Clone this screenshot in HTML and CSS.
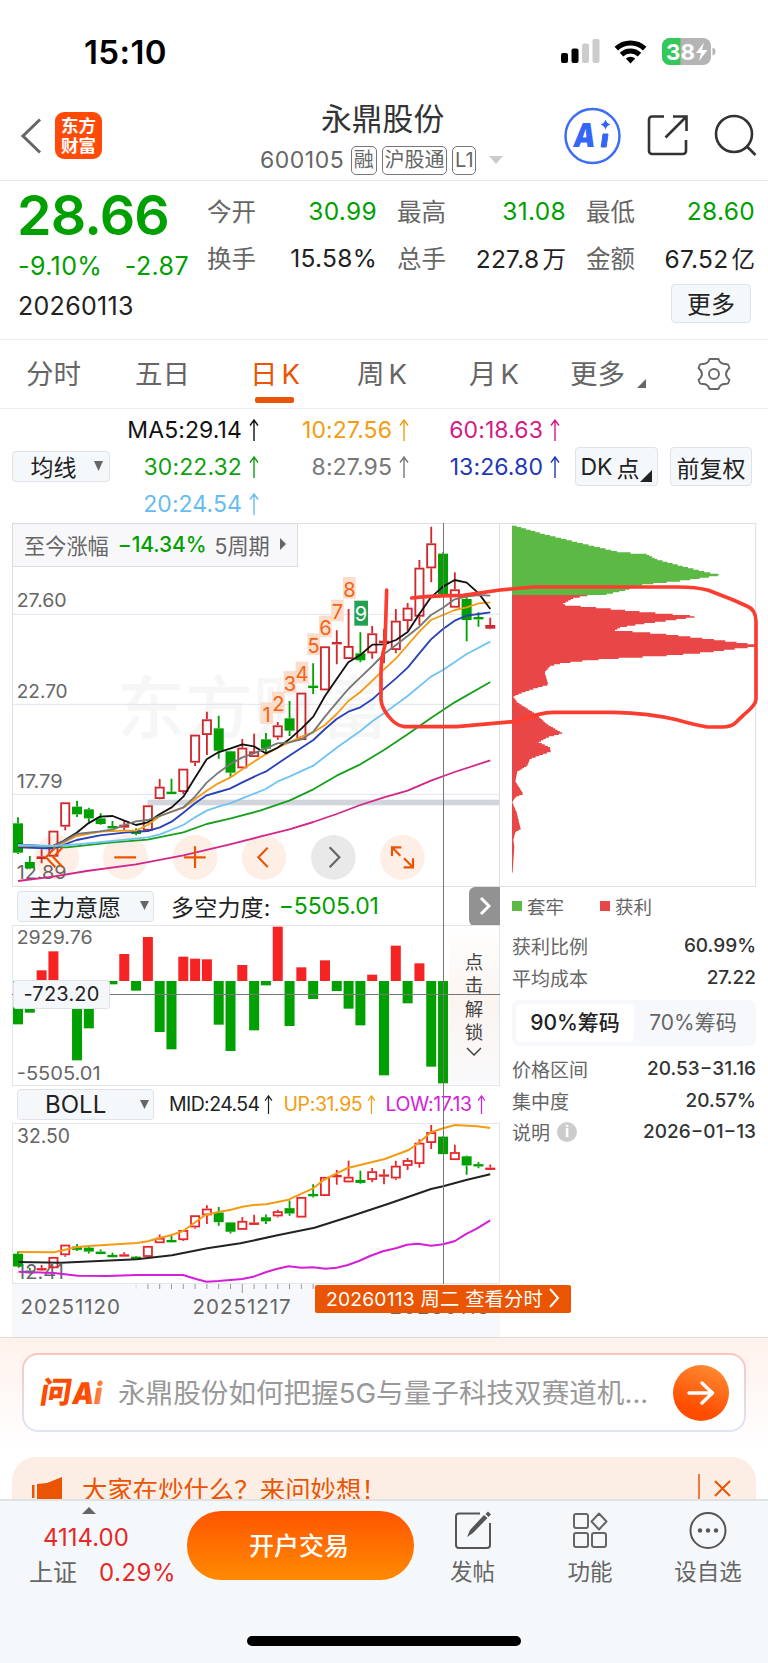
FILE: index.html
```html
<!DOCTYPE html>
<html lang="zh-CN">
<head>
<meta charset="utf-8">
<title>永鼎股份 600105</title>
<link rel="stylesheet" href="styles.css">
</head>
<body>
<svg width="0" height="0" class="defs">
  <symbol id="up" viewBox="0 0 10 22"><path d="M5 22V1M1 6.5 5 1l4 5.500" fill="none" stroke="currentColor" stroke-width="1.4"/></symbol>
</svg>
<div class="page">
  <div class="status">
    <span class="clock">15:10</span>
    <svg class="status-icons" width="156" height="28" viewBox="0 0 156 28">
      <rect x="1" y="15" width="7" height="10" rx="2"/><rect x="11.500" y="10.500" width="7" height="14.500" rx="2"/>
      <rect x="22" y="5.500" width="7" height="19.500" rx="2" fill="#ccc"/><rect x="32.500" y="1" width="7" height="24" rx="2" fill="#ccc"/>
      <path d="M70.500 25.500 65.800 20.600a7 7 0 0 1 9.400 0z"/>
      <path d="M61.500 16.600a13 13 0 0 1 18 0M56.300 10.600a20.500 20.500 0 0 1 28.400 0" fill="none" stroke="#000" stroke-width="5"/>
      <rect x="102" y="0" width="49" height="27" rx="8" fill="#b4b4b4"/>
      <path d="M110 0h10.500v27H110a8 8 0 0 1-8-8V8a8 8 0 0 1 8-8z" fill="#34c759"/>
      <path d="M152.500 9.500q3 1 3 4t-3 4z" fill="#b4b4b4"/>
      <text x="106" y="22" class="batt" textLength="29" lengthAdjust="spacingAndGlyphs">38</text>
      <path d="M144 4.500 136 15h5l-2 8 8.500-11h-5.500z" fill="#fff"/>
    </svg>
  </div>

  <header class="header">
    <svg class="back" width="22" height="36" viewBox="0 0 22 36"><path d="M20 1.500 3 18l17 16.500" fill="none" stroke="#666" stroke-width="3"/></svg>
    <div class="logo"><span>东方</span><span>财富</span></div>
    <div class="title">
      <h1>永鼎股份</h1>
      <div class="sub"><span class="code">600105</span><i>融</i><i>沪股通</i><i>L1</i><svg width="14" height="8"><path d="M0 0h14L7 8z" fill="#ccc"/></svg></div>
    </div>
    <svg class="tools" width="196" height="60" viewBox="0 0 196 60">
      <circle cx="30.500" cy="30" r="27" fill="#fff" stroke="#3d6ef5" stroke-width="2.500"/>
      <g transform="translate(6 0) skewX(-8)"><text x="10" y="41" class="ai" textLength="22" lengthAdjust="spacingAndGlyphs">A</text></g>
      <path d="M41 28h5l-1.800 13h-5z" fill="#3366f5" stroke="#3366f5" stroke-linejoin="round"/><path d="M43.500 13.500q1.200 3.800 5 5-3.800 1.200-5 5-1.200-3.800-5-5 3.800-1.200 5-5z" fill="#3366f5"/>
      <path d="M102 10.500H90a3 3 0 0 0-3 3V45a3 3 0 0 0 3 3h31a3 3 0 0 0 3-3V34M111 10.500h13.500V25M124 11 103.500 31.500" fill="none" stroke="#333" stroke-width="2.600"/>
      <circle cx="172" cy="28" r="18" fill="none" stroke="#333" stroke-width="2.600"/><path d="M185 40.500 193.500 49" stroke="#333" stroke-width="2.600"/>
    </svg>
  </header>

  <section class="quote">
    <div class="last">
      <b class="green">28.66</b>
      <div class="chg green"><span>-9.10%</span><span>-2.87</span></div>
      <div class="date">20260113</div>
    </div>
    <div class="stats">
      <div class="stat"><label>今开</label><span class="green">30.99</span></div>
      <div class="stat"><label>最高</label><span class="green">31.08</span></div>
      <div class="stat"><label>最低</label><span class="green">28.60</span></div>
      <div class="stat"><label>换手</label><span>15.58%</span></div>
      <div class="stat"><label>总手</label><span>227.8<em>万</em></span></div>
      <div class="stat"><label>金额</label><span>67.52<em>亿</em></span></div>
      <button class="btn more">更多</button>
    </div>
  </section>

  <nav class="tabs">
    <span class="t1">分时</span><span class="t2">五日</span><span class="t3 on">日<u>K</u></span><span class="t4">周<u>K</u></span><span class="t5">月<u>K</u></span><span class="t6">更多<svg width="9" height="9"><path d="M9 0v9H0z" fill="#666"/></svg></span>
    <svg class="gear" width="34" height="34" viewBox="0 0 34 34" fill="none" stroke="#666" stroke-width="1.900" stroke-linejoin="round"><path d="M12.500 2h9q1.500 5 6.500 5 2 0 3 .5l1.500 3.500q-3.500 3-3.500 6t3.500 6L31 26.500q-1 .5-3 .5-5 0-6.500 5h-9Q11 27 6 27q-2 0-3-.5L1.500 23Q5 20 5 17T1.500 11L3 7.500Q4 7 6 7q5 0 6.500-5z"/><circle cx="17" cy="17" r="5"/></svg>
  </nav>

  <section class="ma">
    <button class="btn pick">均线<svg width="9" height="10"><path d="M0 0h9L4.500 10z" fill="#666"/></svg></button>
    <div class="vals">
      <span style="color:#111">MA5:29.14<svg><use href="#up"/></svg></span><span style="color:#f39c12">10:27.56<svg><use href="#up"/></svg></span><span style="color:#d31a87">60:18.63<svg><use href="#up"/></svg></span>
      <span style="color:#11a011">30:22.32<svg><use href="#up"/></svg></span><span style="color:#777">8:27.95<svg><use href="#up"/></svg></span><span style="color:#2138b5">13:26.80<svg><use href="#up"/></svg></span>
      <span style="color:#66bcf2">20:24.54<svg><use href="#up"/></svg></span>
    </div>
    <button class="btn dk">DK<em>点</em><svg width="12" height="12"><path d="M12 0v12H0z" fill="#222"/></svg></button>
    <button class="btn adj">前复权</button>
  </section>

  <section class="charts">
    <div class="left">
      <svg class="kline" id="kline" width="488" height="364" viewBox="36 39 1464 1092"></svg>
      <div class="row">
        <button class="btn ind">主力意愿<svg width="9" height="9"><path d="M0 0h9L4.500 9z" fill="#666"/></svg></button>
        <span class="force">多空力度:</span><span class="force green num">−5505.01</span>
        <span class="expand"><svg width="12" height="20"><path d="M2 2l8 8-8 8" fill="none" stroke="#fff" stroke-width="3"/></svg></span>
      </div>
      <div class="volbox">
        <svg id="vol" width="488" height="161" viewBox="36 134 1464 483"></svg>
        <div class="lock"><span>点</span><span>击</span><span>解</span><span>锁</span><svg width="16" height="9"><path d="M1 1l7 7 7-7" fill="none" stroke="#444" stroke-width="1.500"/></svg></div>
        <div class="hline"></div>
        <div class="level">-723.20</div>
      </div>
      <div class="row">
        <button class="btn ind boll">BOLL<svg width="9" height="9"><path d="M0 0h9L4.500 9z" fill="#666"/></svg></button>
        <div class="bvals"><span style="color:#222">MID:24.54<svg><use href="#up"/></svg></span><span style="color:#f39c12">UP:31.95<svg><use href="#up"/></svg></span><span style="color:#d51ed8">LOW:17.13<svg><use href="#up"/></svg></span></div>
      </div>
      <svg id="boll" width="488" height="161" viewBox="12 1123 488 161"></svg>
      <div class="axis">
        <svg id="ticks" width="488" height="10" viewBox="12 1284 488 10"></svg>
        <div class="dates"><span>20251120</span><span>20251217</span><span>20260113</span></div>
        <div class="goto">20260113 周二 查看分时<svg width="12" height="20"><path d="M2 1l8 9-8 9" fill="none" stroke="#fff" stroke-width="2"/></svg></div>
      </div>
    </div>
    <div class="right">
      <svg id="chips" width="257" height="364" viewBox="1500 39 771 1092"></svg>
      <div class="info">
        <div class="legend"><span><i class="g"></i>套牢</span><span><i class="r"></i>获利</span></div>
        <div class="kv"><label>获利比例</label><b>60.99%</b></div>
        <div class="kv"><label>平均成本</label><b>27.22</b></div>
        <div class="seg"><span class="on">90%筹码</span><span>70%筹码</span></div>
        <div class="kv"><label>价格区间</label><b>20.53−31.16</b></div>
        <div class="kv"><label>集中度</label><b>20.57%</b></div>
        <div class="kv"><label>说明<i>i</i></label><b>2026−01−13</b></div>
      </div>
    </div>
    <div class="vline"></div>
    <div class="since">至今涨幅<b class="green">−14.34%</b>5周期<svg width="6" height="12"><path d="M0 0l6 6-6 6z" fill="#666"/></svg></div>
    <svg class="mark" width="768" height="364" viewBox="0 39 2304 1092"><path d="M1160 240 1155 405Q1143 445 1143 490V570Q1146 595 1165 618 1188 648 1213 650H1370L1550 634Q1620 607 1660 607H1840Q1950 610 2030 629 2110 651 2130 651H2165Q2195 651 2210 635L2232 614Q2268 585 2268 568V335Q2268 298 2240 288L2200 270 2125 241Q2090 231 2030 231H1600L1500 240 1390 256Q1300 256 1235 264" fill="none" stroke="#fb3d30" stroke-width="11" stroke-linecap="round" stroke-linejoin="round"/></svg>
  </section>

  <section class="ask">
    <div class="askbox">
      <svg width="64" height="34" viewBox="0 -2 64 34"><defs><linearGradient id="lg" x2="1"><stop offset=".5" stop-color="#fc4c02"/><stop offset="1" stop-color="#ff9050"/></linearGradient></defs><g transform="skewX(-9)"><text class="wen" x="3" y="25" fill="#fc4c02" textLength="31" lengthAdjust="spacingAndGlyphs">问</text><text class="wen" x="35" y="26" fill="url(#lg)" textLength="30" lengthAdjust="spacingAndGlyphs">Ai</text></g></svg>
      <span>永鼎股份如何把握5G与量子科技双赛道机...</span>
      <i><svg width="28" height="24" viewBox="0 0 28 24"><path d="M2 12h23M15 2l10.500 10L15 22" fill="none" stroke="#fff" stroke-width="3.400" stroke-linecap="round" stroke-linejoin="round"/></svg></i>
    </div>
    <div class="notice">
      <svg width="32" height="32" viewBox="0 0 32 32" fill="#ea5504"><path d="M1 9h2.500v13H1zM6 8l10-1L31 1v30l-9-4H10l-2-4H6z"/></svg>
      <span>大家在炒什么？来问妙想！</span>
      <svg width="34" height="44" viewBox="0 0 34 44" fill="none" stroke="#ea5504"><path d="M1 6v34" stroke-width="1.500"/><path d="M17 13 32 28M32 13 17 28" stroke-width="2"/></svg>
    </div>
  </section>

  <footer class="foot">
    <div class="index"><svg width="14" height="7"><path d="M7 0l7 7H0z" fill="#666"/></svg><span class="pt">4114.00</span><div><label>上证</label><span>0.29%</span></div></div>
    <button class="open">开户交易</button>
    <div class="act a1"><svg width="38" height="40" viewBox="0 0 38 40" fill="none" stroke="#555" stroke-width="2"><path d="M26 2.500H5a3 3 0 0 0-3 3V34a3 3 0 0 0 3 3h28a3 3 0 0 0 3-3V12"/><path d="m13 26 3-7L30 4l3.500 3L19 22z" fill="#555" stroke="none"/><path d="m31.500 3 2.500-2.500 3 3L34.500 6z" fill="#555" stroke="none"/></svg><span>发帖</span></div>
    <div class="act a2"><svg width="36" height="40" viewBox="0 0 36 40" fill="none" stroke="#666" stroke-width="2"><rect x="2" y="3" width="14" height="14" rx="2"/><rect x="2" y="22" width="14" height="14" rx="2"/><rect x="20" y="22" width="14" height="14" rx="2"/><path d="m27 2.500 7.500 8-7.500 8-7.500-8z" stroke-linejoin="round"/></svg><span>功能</span></div>
    <div class="act a3"><svg width="40" height="40" viewBox="0 0 40 40"><circle cx="20" cy="19.500" r="17.500" fill="none" stroke="#555" stroke-width="2"/><g fill="#555"><circle cx="12" cy="19.500" r="2.200"/><circle cx="20" cy="19.500" r="2.200"/><circle cx="28" cy="19.500" r="2.200"/></g></svg><span>设自选</span></div>
    <div class="home"></div>
  </footer>
</div>
<script src="charts.js"></script>
</body>
</html>
```
FILE: styles.css
```css
* { box-sizing: border-box; }
body { margin: 0; background: #fff; color: #222; font-family: Inter, "Noto Sans CJK SC", sans-serif; }
.defs { position: absolute; }
svg { display: block; flex: none; }
em, i { font-style: normal; }
button { font: inherit; color: inherit; margin: 0; padding: 0; }
.page { width: 768px; height: 1663px; overflow: hidden; display: flex; flex-direction: column; white-space: nowrap; }
.page > * { flex: none; }
.green { color: #00a000; }
.btn { display: flex; align-items: center; justify-content: center; background: #f5f8fa; border: 1.500px solid #dfe3e7; border-radius: 4px; }

.status { height: 96px; padding: 37px 52px 0 84px; display: flex; justify-content: space-between; }
.clock { font-size: 33px; line-height: 30px; font-weight: 600; color: #000; letter-spacing: .4px; }
.batt { font: 700 22px Inter; fill: #fff; }
.status-icons { margin-top: 1px; }

.header { height: 85px; border-bottom: 1.500px solid #e8e8e8; display: flex; padding-left: 20px; }
.back { margin-top: 22px; }
.logo { margin: 16px 0 0 13px; width: 47px; height: 47px; border-radius: 9px; background: #ff4a08; color: #fff; font-size: 17.500px; line-height: 19.500px; font-weight: 700; text-align: center; padding-top: 4px; }
.logo span { display: block; }
.title { width: 460px; padding-left: 158px; }
.title h1 { margin: 5px 0 0; font-size: 30.800px; line-height: 36px; font-weight: 400; color: #333; padding-left: 61px; }
.sub { display: flex; align-items: center; height: 30px; margin-top: 8px; color: #666; }
.code { font-size: 23px; width: 86px; letter-spacing: .5px; margin-right: 5px; }
.sub i { border: 1.500px solid #777; border-radius: 5px; height: 29px; line-height: 26px; font-size: 20px; padding: 0 1.800px; margin-right: 5px; }
.sub svg { margin-left: 8px; }
.tools { margin-top: 10px; }
.ai { font: 900 33px Inter; fill: #3366f5; }

.quote { height: 159px; border-bottom: 1.500px solid #eee; display: flex; padding: 0 13px 0 18px; }
.last { width: 189px; }
.last b { display: block; font-size: 55.500px; font-weight: 600; line-height: 66px; letter-spacing: -.8px; margin: 1px 0 0 -1px; }
.chg { display: flex; justify-content: space-between; width: 171px; font-size: 25px; line-height: 30px; margin-top: 3px; letter-spacing: .4px; }
.date { font-size: 25px; line-height: 30px; margin-top: 10px; letter-spacing: .3px; }
.stats { width: 548px; display: grid; grid-template-columns: 170px 169px 169px; column-gap: 20px; grid-template-rows: 47px 47px 40px; padding-top: 7px; }
.stat { display: flex; justify-content: space-between; align-items: center; font-size: 24.500px; letter-spacing: .3px; }
.stat span { margin-bottom: 2px; }
.stat label { color: #666; letter-spacing: 0; margin-bottom: 2px; }
.stat em { margin-left: 3px; font-size: 23.500px; letter-spacing: 0; }
.more { grid-column: 3; justify-self: end; width: 80px; height: 39px; font-size: 24px; margin: 2px 4px 0 0; padding-bottom: 2px; }

.tabs { height: 69px; border-bottom: 1.500px solid #eee; display: flex; padding: 14px 0 0 26px; font-size: 27.500px; line-height: 40px; color: #666; }
.tabs u { text-decoration: none; margin-left: 4px; }
.t1 { width: 109px; } .t2 { width: 115px; } .t3 { width: 107px; } .t4 { width: 112px; } .t5 { width: 101px; } .t6 { width: 127px; display: flex; }
.t6 svg { margin: 25px 0 0 12px; }
.tabs .on { color: #ea5504; }
.t3.on::after { content: ""; display: block; width: 39px; height: 6px; border-radius: 2px; background: #ea5504; margin: 3px 0 0 5px; }
.gear { margin-top: 3px; }

.ma { height: 114px; display: flex; padding-left: 12px; }
.pick { width: 98px; height: 31px; margin-top: 42px; font-size: 23px; padding: 0 0 1px 11px; }
.pick svg { margin-left: 17px; }
.vals { display: grid; grid-template-columns: 149px 150px 151px; grid-template-rows: 37.500px 37px 37px; padding-top: 2px; width: 465px; font-size: 23px; letter-spacing: .1px; }
.vals span { display: flex; align-items: center; justify-content: flex-end; }
.vals svg { width: 10px; height: 22px; margin-left: 7px; }
.dk, .adj { height: 39px; margin-top: 38px; font-size: 23px; }
.dk { width: 83px; position: relative; padding-right: 13px; }
.dk em { margin-left: 4px; }
.dk svg { position: absolute; right: 5px; bottom: 3px; }
.adj { width: 82px; margin-left: 12px; }

.charts { height: 815px; display: flex; padding-left: 12px; position: relative; border-bottom: 1.500px solid #d8dadd; }
.left { width: 488px; }
.right { width: 257px; }
.row { height: 38px; display: flex; align-items: center; padding-left: 5px; }
.ind { width: 137px; height: 31px; font-size: 23px; padding: 0 0 1px 11px; justify-content: flex-start; }
.ind svg { margin-left: 19px; }
.boll { padding: 0 0 0 27px; font-size: 24px; }
.boll svg { margin-left: 34px; }
.force { font-size: 23px; margin-left: 17px; letter-spacing: .2px; }
.force.num { margin-left: 8px; letter-spacing: -.1px; }
.expand { margin-left: auto; width: 31px; height: 39px; background: #929292; border-radius: 6px 0 0 6px; display: flex; align-items: center; justify-content: center; }
.volbox { position: relative; height: 160px; }
.lock { position: absolute; right: 1px; top: 1px; width: 50px; height: 158px; padding-top: 25px; background: linear-gradient(#fff, #faf4ef 50%, #fafafc); color: #444; font-size: 18.500px; line-height: 23.300px; display: flex; flex-direction: column; align-items: center; }
.lock svg { margin-top: 3px; }
.hline { position: absolute; left: 0; right: 0; top: 69px; height: 1px; background: #777; }
.level { position: absolute; left: 1px; top: 55px; width: 97px; height: 29px; background: #f5f8fa; border: 1px solid #dfe3e7; border-radius: 3px; font-size: 20px; line-height: 27px; text-align: center; letter-spacing: .2px; }
.bvals { display: grid; grid-template-columns: 114.500px 102px 105px; margin-left: 15px; font-size: 19.500px; letter-spacing: -.6px; }
.bvals span { display: flex; align-items: center; }
.bvals svg { width: 9px; height: 19px; margin-left: 5px; }
.bvals span + span { letter-spacing: -.4px; }
.axis { height: 53px; background: #f7f8fb; position: relative; color: #666; }
.dates { display: grid; grid-template-columns: 172px 197px 110px; padding-left: 8.500px; font-size: 20.500px; line-height: 26px; letter-spacing: 1px; }
.goto { position: absolute; left: 303px; top: 1px; height: 28px; width: 256px; background: #ea5504; color: #fff; border-radius: 2px; display: flex; align-items: center; justify-content: center; font-size: 19.300px; letter-spacing: .2px; padding-bottom: 2px; }
.goto svg { margin-left: 5px; }

.info { padding: 3px 1px 0 12px; color: #666; font-size: 19px; }
.legend { display: flex; height: 31px; align-items: center; font-size: 18.500px; }
.legend span { width: 88px; display: flex; align-items: center; }
.legend i { width: 10px; height: 10px; margin-right: 5px; }
.g { background: #5bb944; } .r { background: #e94747; }
.kv { height: 31.500px; display: flex; justify-content: space-between; align-items: center; }
.legend + .kv { margin-top: 9px; }
.kv b { color: #333; font-weight: 500; letter-spacing: 0; font-size: 19px; }
.kv label { display: flex; align-items: center; }
.kv i { width: 20px; height: 20px; border-radius: 10px; background: #ccc; color: #fff; font-size: 15px; line-height: 20px; text-align: center; font-weight: 700; margin-left: 7px; }
.seg { height: 46px; margin: 7px 0 7px; background: #f7f8fb; border-radius: 7px; display: flex; padding: 4px; font-size: 21px; line-height: 38px; text-align: center; }
.seg span { width: 118px; }
.seg .on { background: #fff; border-radius: 5px; color: #222; font-weight: 500; }
.vline { position: absolute; left: 443px; top: 0; width: 1px; height: 761px; background: #777; }
.since { position: absolute; left: 12px; top: 0; width: 286px; height: 44px; background: #f8f8fb; border: 1px solid #dadde2; display: flex; align-items: center; color: #666; font-size: 21.200px; padding: 0 0 2px 11px; }
.since b { font-weight: 500; margin: 0 8px 0 9px; font-size: 21px; letter-spacing: -.1px; }
.since svg { margin-left: 10px; }
.mark { position: absolute; left: 0; top: 0; }

.ask { height: 161px; overflow: hidden; padding: 15px 12px 0; background: linear-gradient(#fff1ec, #fff 110px); }
.askbox { margin: 0 10px; height: 79px; border: 2px solid transparent; border-radius: 16px; background: linear-gradient(#fff, #fff) padding-box, linear-gradient(#fbc4bc, #dfe5f6) border-box; display: flex; align-items: center; padding-left: 16px; }
.wen { font: 900 30px Inter, "Noto Sans CJK SC"; }
.askbox span { font-size: 27.600px; color: #999; margin-left: 14px; width: 535px; padding-bottom: 3px; }
.askbox i { width: 56px; height: 56px; margin-left: 20px; border-radius: 50%; background: linear-gradient(200deg, #ff9138, #ff4d00 75%); display: flex; align-items: center; justify-content: center; }
.notice { margin-top: 25px; height: 64px; border-radius: 24px; background: #fdeee5; color: #ea5504; display: flex; padding: 0 24px 0 18px; font-size: 25.400px; line-height: 66px; }
.notice svg:first-child { margin: 19px 19px 0 1px; }
.notice svg:last-child { margin: 11px 0 0 auto; }

.foot { height: 164px; background: #f5f8fa; border-top: 2px solid #dfe3e5; display: flex; position: relative; }
.index { width: 187px; display: flex; flex-direction: column; color: #e62828; font-size: 24px; padding-top: 6px; letter-spacing: .5px; }
.index svg { margin-left: 82px; }
.pt { margin: 7px 0 0 43px; line-height: 34px; letter-spacing: 0; }
.index div { display: flex; margin: 0 0 0 29px; line-height: 35px; }
.index label { color: #666; width: 70px; letter-spacing: 0; }
.open { width: 227px; height: 69px; margin-top: 10px; border: 0; border-radius: 34px; background: linear-gradient(#ff5500, #ff8a00); color: #fff; font-size: 25px; font-weight: 500; padding: 0 3px 3px 0; }
.act { display: flex; flex-direction: column; align-items: center; color: #666; font-size: 22.500px; padding-top: 10px; width: 118px; }
.act span { line-height: 34px; margin-top: 4px; }
.a1 { width: 117px; }
.home { position: absolute; left: 247px; top: 135px; width: 274px; height: 10px; border-radius: 5px; background: #000; }
```
FILE: charts.js
```js
// Drawing units are thirds of a pixel; candle i sits at x = 54 + 35.42 * i.
const X = i => 54 + 35.42 * i;
const RED = '#d0282c', GREEN = '#00a000';
// [up, body top, body bottom, high, low]; up: 1 rising, 0 falling
const candles = [
  [0,940,1028,922,1032],[0,1056,1075,1038,1078],[1,1039,1047,1018,1060],[1,962,1040,962,1040],[1,877,950,877,961],
  [0,890,913,872,921],[0,898,925,893,938],[0,925,942,910,944],[0,948,953,933,955],[1,944,953,930,960],
  [0,960,972,955,976],[1,886,962,886,965],[1,830,867,807,868],[0,845,850,806,852],[1,776,846,776,852],
  [1,674,758,674,768],[1,628,675,605,735],[0,655,722,617,746],[0,724,788,722,801],[1,713,775,687,775],
  [1,724,741,671,741],[0,688,716,669,735],[1,646,682,636,689],[0,625,662,573,678],[1,548,690,548,690],
  [0,527,533,460,552],[1,409,541,409,541],[1,396,403,361,463],[1,408,447,297,447],[0,430,451,367,457],
  [1,370,430,348,446],[1,392,400,357,460],[1,332,420,297,430],[1,293,333,279,362],[1,173,320,150,346],
  [1,100,175,50,217],[0,131,252,127,252],[1,238,293,187,293],[0,267,330,262,394],[0,321,326,307,350],[1,345,356,323,358]
];
const averages = [
  ['#d3268a', '54,1113 160,1100 260,1083 408,1063 550,1036 690,1003 780,980 868,958 940,936 1010,912 1081,885 1152,862 1223,842 1293,812 1364,786 1471,751'],
  ['#18a01c', '54,1008 200,1012 338,997 443,989 550,967 620,942 690,926 780,902 868,872 940,838 1010,797 1081,763 1152,720 1223,673 1293,624 1364,577 1471,516'],
  ['#2a40b8', '54,1012 160,1016 230,990 300,976 373,968 443,963 480,952 515,935 550,908 585,880 620,856 655,846 690,836 727,817 780,792 797,785 868,737 940,690 975,657 1010,627 1045,605 1081,592 1117,568 1152,536 1188,505 1223,473 1258,430 1293,388 1329,357 1364,332 1400,317 1436,312 1471,307'],
  ['#f59b11', '54,1008 170,1008 230,978 300,965 373,962 408,962 443,945 480,918 515,905 550,893 585,868 620,842 655,820 690,803 727,778 762,755 797,733 832,713 868,697 905,680 940,667 975,645 1010,612 1045,573 1081,546 1117,512 1152,478 1188,445 1223,405 1258,365 1293,330 1329,315 1364,300 1400,292 1436,280 1471,277'],
  ['#111', '54,1003 155,1010 190,993 230,968 265,940 300,920 338,918 373,932 408,945 443,937 480,912 515,892 550,860 585,803 620,748 655,727 690,716 727,703 762,709 797,730 832,714 868,688 905,655 940,620 975,558 1010,507 1045,457 1081,435 1117,404 1152,403 1188,390 1223,366 1258,312 1293,262 1329,230 1364,210 1400,218 1436,250 1471,297'],
  ['#777', '54,1006 155,1009 190,995 230,972 300,964 340,958 373,945 408,934 443,930 480,918 550,892 585,860 620,818 655,788 690,763 727,742 762,730 797,715 832,700 868,697 905,688 940,665 975,620 1010,578 1045,537 1081,502 1117,468 1152,432 1188,405 1223,378 1258,350 1293,315 1329,293 1364,268 1400,260 1436,255 1471,257'],
  ['#70c3f5', '54,1005 160,1008 230,1003 338,993 443,982 480,973 550,945 585,922 620,902 655,890 690,880 727,865 797,837 832,815 868,800 940,767 1010,713 1081,663 1117,634 1152,610 1223,558 1293,500 1329,480 1400,432 1471,395']
];
const line = (pts, color, w) => `<polyline points="${pts}" fill="none" stroke="${color}" stroke-width="${w}" stroke-linejoin="round"/>`;
const text = (x, y, s, len, size) => `<text x="${x}" y="${y}" fill="#666" font-size="${size}" textLength="${len}" lengthAdjust="spacingAndGlyphs">${s}</text>`;

function drawCandles(fx, fy, half, sw, red) {
  return candles.map(([up, t, b, h, l], i) => {
    const x = fx(X(i)), c = up ? red : GREEN;
    const top = fy(t), bot = Math.max(fy(b), top + sw * 1.3), thin = bot - top < 2.5 * sw;
    const wick = `<path d="M${x} ${fy(h)}V${top}M${x} ${bot}V${fy(l)}" stroke="${c}" stroke-width="${sw}"/>`;
    const body = up && !thin
      ? `<rect x="${x - half + sw / 2}" y="${top + sw / 2}" width="${2 * half - sw}" height="${bot - top - sw}" fill="none" stroke="${c}" stroke-width="${sw}"/>`
      : `<rect x="${x - half}" y="${top}" width="${2 * half}" height="${bot - top}" fill="${c}"/>`;
    return wick + body;
  }).join('');
}

// Main candlestick chart
let s = `<text x="350" y="668" font-size="204" font-weight="500" fill="#f6f6f7" textLength="816">东方财富</text>`;
s += [313, 583, 853].map(y => `<path d="M37 ${y}H1500" stroke="#e0e5ec" stroke-width="3"/>`).join('');
s += '<rect x="443" y="869" width="1057" height="17" fill="#d2d6dc"/>';
[170, 376, 585, 792, 1000, 1207].forEach((x, i) => s += `<circle cx="${x}" cy="1042" r="67" fill="${i === 4 ? '#e9e9ea' : '#fdeee6'}"/>`);
s += text(50, 292, '27.60', 150, 58) + text(50, 563, '22.70', 153, 58) + text(50, 833, '17.79', 138, 58) + text(50, 1108, '12.89', 150, 58);
s += drawCandles(x => x, y => y, 15, 5.5, RED);
s += averages.map(a => line(a[1], a[0], 5.5)).join('');
s += `<g fill="none" stroke="#ea5504" stroke-width="6.500"><path d="M166 1012 138 1042 166 1072M188 1012 160 1042 188 1072M343 1042H408M552 1042H617M585 1009V1074M803 1013 775 1042 803 1071"/>
<path d="M989 1012 1018 1042 989 1072" stroke="#666"/><path d="M1176 1038V1012H1204M1178 1014 1201 1037M1211 1072H1239V1045M1237 1070 1212 1045"/></g>`;
[[800,612],[835,580],[870,518],[906,490],[941,405],[976,352],[1012,304],[1048,236]].forEach(([x, y], i) => {
  s += `<rect x="${x - 19}" y="${y - 35}" width="38" height="65" fill="#fcdccb"/><text x="${x}" y="${y + 24}" font-size="60" text-anchor="middle" fill="#ef6415">${i + 1}</text>`;
});
s += '<rect x="1063" y="272" width="41" height="75" fill="#24a052"/><text x="1083" y="333" font-size="60" text-anchor="middle" fill="#fff">9</text>';
s += '<rect x="37.5" y="40.5" width="1461" height="1089" fill="none" stroke="#dcdfe4" stroke-width="3"/>';
document.getElementById('kline').innerHTML = s;

// Main-force bars around the zero line at 302
const ends = [432,397,270,213,330,540,444,320,312,221,331,170,455,507,229,235,237,433,512,254,450,315,139,437,261,356,240,332,385,435,283,585,196,369,249,559,609];
let v = '<rect x="37.5" y="135.5" width="1461" height="480" fill="none" stroke="#e2e5e9" stroke-width="3"/>';
v += text(50, 192, '2929.76', 228, 57) + text(50, 600, '-5505.01', 252, 57);
ends.forEach((e, i) => v += `<rect x="${X(i) - 15}" y="${Math.min(e, 302)}" width="30" height="${Math.abs(e - 302)}" fill="${e < 302 ? '#f52323' : GREEN}"/>`);
document.getElementById('vol').innerHTML = v;

// Bollinger bands, in pixels; the candles share the prices above
const band = pts => pts.split(' ').map(p => { const [x, y] = p.split(','); return `${(x / 2.703).toFixed(1)},${(1080 + y / 3).toFixed(1)}`; }).join(' ');
let b = '<rect x="12.5" y="1123.5" width="487" height="160" fill="none" stroke="#e2e5e9"/>';
b += text(17, 1143, '32.50', 53, 20) + text(17, 1279, '12.41', 47, 20);
b += drawCandles(x => x / 3, y => 1124 + (510 + y / 3 - 524.6) * 0.4343, 5, 1.8, '#e8262a');
b += line(band('50,516 146,517 205,502 240,498 370,489 400,484 430,474 462,466 495,453 555,405 590,396 625,389 655,380 685,375 720,373 750,366 780,359 815,341 845,326 875,300 910,280 940,264 1040,237 1105,210 1130,190 1165,157 1198,145 1230,135 1290,139 1325,144'), '#f59b11', 2);
b += line(band('50,546 165,548 370,538 465,526 560,505 650,490 750,466 850,443 950,408 1050,371 1165,327 1198,319 1260,300 1325,283'), '#222', 2);
b += line(band('50,575 146,579 210,587 290,588 370,585 495,585 530,597 558,605 590,603 655,597 685,590 720,576 750,566 780,559 815,563 845,562 880,566 910,563 940,555 970,543 1000,528 1035,514 1070,505 1100,494 1130,491 1165,497 1198,493 1230,483 1258,463 1290,445 1325,421'), '#d51ed8', 2);
document.getElementById('boll').innerHTML = b;

let t = '';
for (let i = 10; i < 26; i++) t += `<path d="M${X(i) / 3} 1284v${i === 19 ? 9 : 5}" stroke="${i < 11 ? '#ddd' : '#999'}"/>`;
document.getElementById('ticks').innerHTML = t;

// Cost distribution: one bar for each price step, [y, x] outline
const trapped = [[47,50],[70,130],[97,240],[124,355],[131,440],[147,472],[170,560],[186,625],[193,668],[200,620],[210,550],[222,430],[240,372],[250,325],[255,298]];
const profit = [[255,262],[262,222],[282,184],[292,300],[305,440],[317,596],[325,545],[340,425],[350,362],[359,345],[370,490],[385,625],[396,718],[402,766],[409,766],[413,720],[425,625],[435,500],[445,320],[452,235],[460,172],[467,150],[485,134],[522,145],[535,100],[548,62],[558,40],[575,52],[612,110],[640,140],[668,188],[680,143],[695,116],[710,150],[723,152],[735,118],[745,90],[765,82],[783,52],[812,46],[850,70],[860,46],[875,37],[905,50],[955,62],[965,46],[988,40],[1008,43],[1083,38],[1090,36]];
function bars(o, color) {
  let d = 'M1536 ' + o[0][0], k = 0;
  const last = o[o.length - 1][0];
  for (let y = o[0][0]; y < last; y += 4) {
    while (o[k + 1][0] < y) k++;
    const [a, p] = o[k], [c, q] = o[k + 1];
    d += `L${1500 + p + (q - p) * (y - a) / (c - a)} ${y}v${Math.min(4, last - y)}`;
  }
  return `<path d="${d}L1536 ${last}z" fill="${color}"/>`;
}
document.getElementById('chips').innerHTML = '<rect x="1495" y="40.500" width="772" height="1089" fill="none" stroke="#dcdfe4" stroke-width="3"/>' + bars(trapped, '#5bb944') + bars(profit, '#e94747');
```
